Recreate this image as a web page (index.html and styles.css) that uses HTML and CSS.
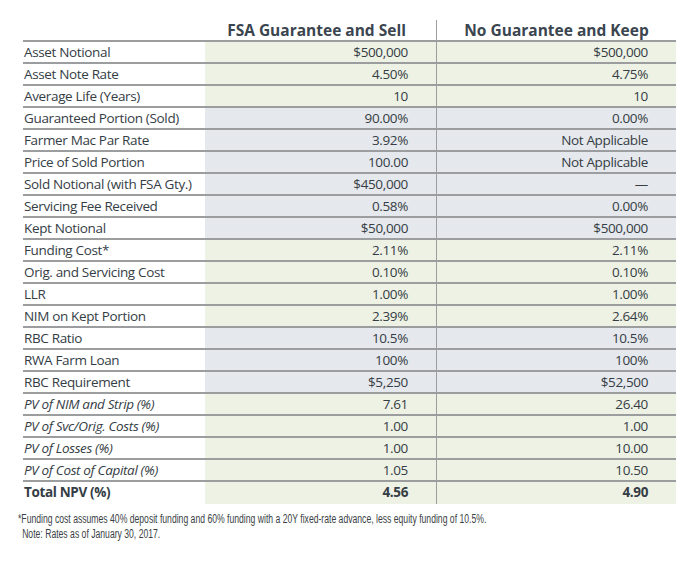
FILE: index.html
```html
<!DOCTYPE html>
<html>
<head>
<meta charset="utf-8">
<link rel="stylesheet" href="styles.css">
</head>
<body>
<div class="page">
  <div class="table">
    <div class="row head">
      <div class="label"></div>
      <div class="c1 hcell">FSA Guarantee and Sell</div>
      <div class="c2 hcell">No Guarantee and Keep</div>
    </div>
    <div class="row top green"><div class="label">Asset Notional</div><div class="c1">$500,000</div><div class="c2">$500,000</div></div>
    <div class="row green"><div class="label">Asset Note Rate</div><div class="c1">4.50%</div><div class="c2">4.75%</div></div>
    <div class="row green"><div class="label">Average Life (Years)</div><div class="c1">10</div><div class="c2">10</div></div>
    <div class="row grey"><div class="label">Guaranteed Portion (Sold)</div><div class="c1">90.00%</div><div class="c2">0.00%</div></div>
    <div class="row grey"><div class="label">Farmer Mac Par Rate</div><div class="c1">3.92%</div><div class="c2">Not Applicable</div></div>
    <div class="row grey"><div class="label">Price of Sold Portion</div><div class="c1">100.00</div><div class="c2">Not Applicable</div></div>
    <div class="row grey"><div class="label">Sold Notional (with FSA Gty.)</div><div class="c1">$450,000</div><div class="c2">—</div></div>
    <div class="row grey"><div class="label">Servicing Fee Received</div><div class="c1">0.58%</div><div class="c2">0.00%</div></div>
    <div class="row grey"><div class="label">Kept Notional</div><div class="c1">$50,000</div><div class="c2">$500,000</div></div>
    <div class="row green"><div class="label">Funding Cost*</div><div class="c1">2.11%</div><div class="c2">2.11%</div></div>
    <div class="row green"><div class="label">Orig. and Servicing Cost</div><div class="c1">0.10%</div><div class="c2">0.10%</div></div>
    <div class="row green"><div class="label">LLR</div><div class="c1">1.00%</div><div class="c2">1.00%</div></div>
    <div class="row green"><div class="label">NIM on Kept Portion</div><div class="c1">2.39%</div><div class="c2">2.64%</div></div>
    <div class="row grey"><div class="label">RBC Ratio</div><div class="c1">10.5%</div><div class="c2">10.5%</div></div>
    <div class="row grey"><div class="label">RWA Farm Loan</div><div class="c1">100%</div><div class="c2">100%</div></div>
    <div class="row grey"><div class="label">RBC Requirement</div><div class="c1">$5,250</div><div class="c2">$52,500</div></div>
    <div class="row green"><div class="label it">PV of NIM and Strip (%)</div><div class="c1">7.61</div><div class="c2">26.40</div></div>
    <div class="row green"><div class="label it">PV of Svc/Orig. Costs (%)</div><div class="c1">1.00</div><div class="c2">1.00</div></div>
    <div class="row green"><div class="label it">PV of Losses (%)</div><div class="c1">1.00</div><div class="c2">10.00</div></div>
    <div class="row green"><div class="label it">PV of Cost of Capital (%)</div><div class="c1">1.05</div><div class="c2">10.50</div></div>
    <div class="row green last total"><div class="label">Total NPV (%)</div><div class="c1">4.56</div><div class="c2">4.90</div></div>
  </div>
  <div class="notes">
    <p class="note1">*Funding cost assumes 40% deposit funding and 60% funding with a 20Y fixed-rate advance, less equity funding of 10.5%.</p>
    <p class="note2">Note: Rates as of January 30, 2017.</p>
  </div>
</div>
</body>
</html>
```

FILE: styles.css
```css
html, body {
  margin: 0;
  padding: 0;
  background: #ffffff;
}
.page {
  width: 700px;
  height: 561px;
  padding: 20px 0 0 23px;
  box-sizing: border-box;
  font-family: "Open Sans", "Noto Sans", sans-serif;
  color: #353d45;
}
.table {
  width: 653px;
}
.row {
  display: grid;
  grid-template-columns: 182px 231px 240px;
  height: 22px;
  box-sizing: border-box;
  font-size: 13.5px;
  letter-spacing: -0.35px;
  line-height: 20px;
  border-bottom: 2px solid #9b9d9f;
}
.row.last {
  border-bottom: none;
}
.row > div {
  white-space: nowrap;
}
.label {
  padding-left: 1px;
  background: #ffffff;
}
.c1, .c2 {
  text-align: right;
  padding-right: 28px;
}
.c2 {
  border-left: 1px solid #9b9d9f;
}
.green .c1, .green .c2 {
  background: #edf2e4;
}
.grey .c1, .grey .c2 {
  background: #e5e8ec;
}
.hcell {
  text-align: center;
  padding-right: 0;
  font-weight: 700;
  font-size: 15.5px;
  letter-spacing: 0;
  color: #3b4550;
}
.head .c1 {
  padding-right: 8px;
}
.it {
  font-style: italic;
}
.total {
  font-weight: 700;
}
.notes {
  margin-top: 8px;
  margin-left: -5px;
  font-family: "Liberation Sans", Arial, sans-serif;
  font-size: 12.5px;
  line-height: 14.5px;
  color: #3a3f45;
  transform: scaleX(0.69);
  transform-origin: 0 0;
  white-space: nowrap;
}
.notes p {
  margin: 0;
}
.note2 {
  padding-left: 6px;
}
```
